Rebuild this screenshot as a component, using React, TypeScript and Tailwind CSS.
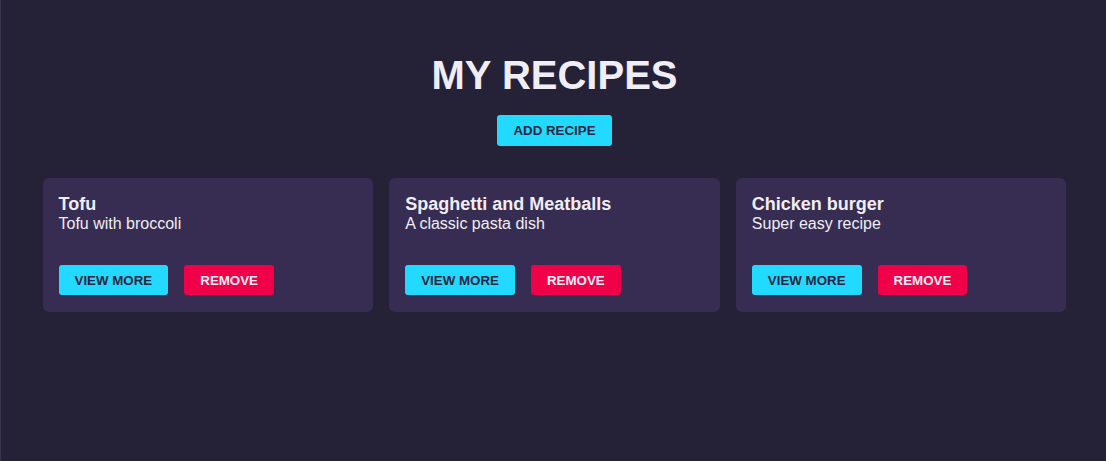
import React from "react";

const recipes = [
  { title: "Tofu", desc: "Tofu with broccoli" },
  { title: "Spaghetti and Meatballs", desc: "A classic pasta dish" },
  { title: "Chicken burger", desc: "Super easy recipe" },
];

export default function App() {
  return (
    <div
      className="min-h-[461px] w-full bg-[#252137] border-l border-[#3a354d] pl-[2px] text-[#f0eef5]"
      style={{ fontFamily: '"Liberation Sans", Arial, sans-serif' }}
    >
      <div className="mx-auto max-w-[1024px] pt-[52px] flex flex-col items-center">
        <h1 className="text-[40px] leading-[46px] font-bold">MY RECIPES</h1>
        <button className="mt-[17px] h-[31px] px-4 rounded-[3px] bg-[#22d9ff] text-[#2a2540] text-[13.33px] font-bold leading-none">
          ADD RECIPE
        </button>
        <div className="mt-[32px] w-full grid grid-cols-3 gap-4">
          {recipes.map((r) => (
            <div key={r.title} className="bg-[#372c52] rounded-md px-4 pt-4 pb-[17px] flex flex-col">
              <div className="text-[18px] leading-[21px] font-bold">{r.title}</div>
              <div className="text-[16px] leading-[18.4px]">{r.desc}</div>
              <div className="mt-[32px] flex gap-4">
                <button className="h-[30px] px-4 rounded-[3px] bg-[#22d9ff] text-[#2a2540] text-[13.33px] font-bold leading-none">
                  VIEW MORE
                </button>
                <button className="h-[30px] px-4 rounded-[3px] bg-[#ef0049] text-[#f0eef5] text-[13.33px] font-bold leading-none">
                  REMOVE
                </button>
              </div>
            </div>
          ))}
        </div>
      </div>
    </div>
  );
}
